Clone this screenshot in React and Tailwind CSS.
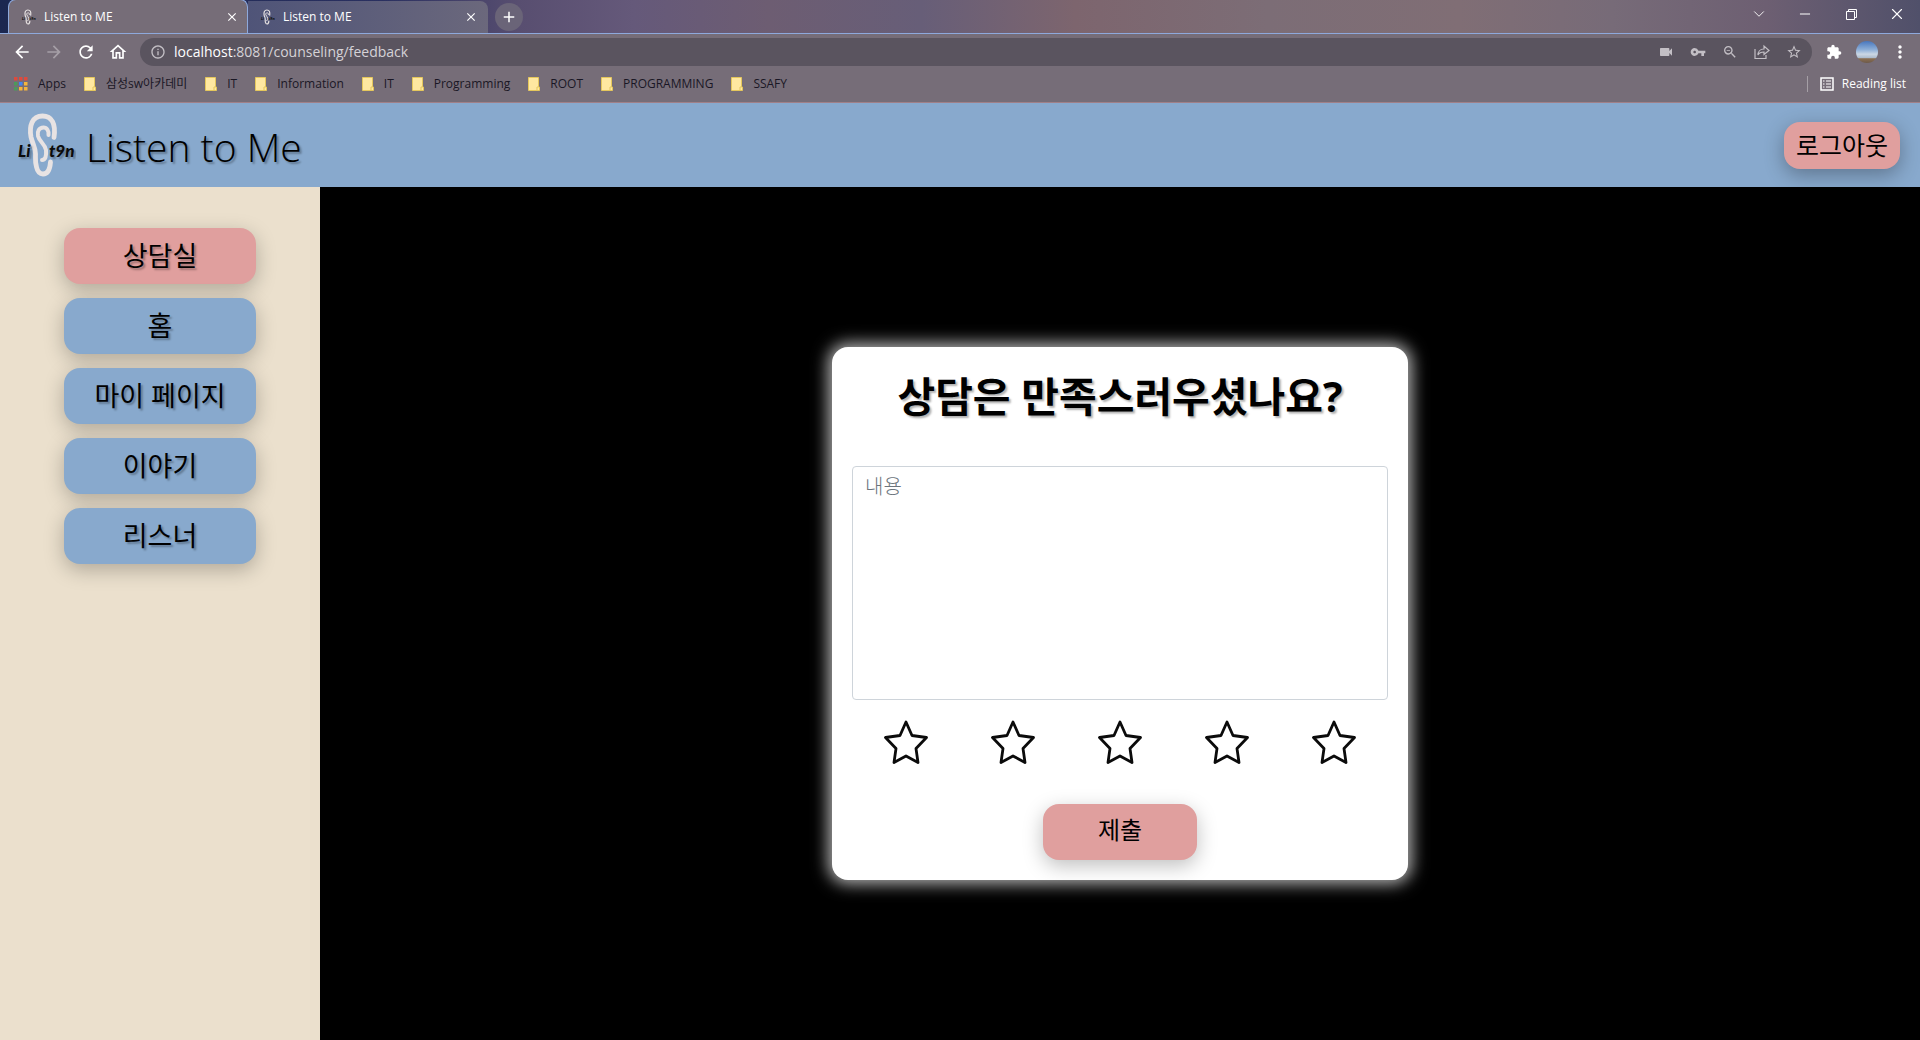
import { ChevronDown, Minus, X } from "lucide-react";
import {
  MdArrowBack, MdArrowForward, MdRefresh, MdOutlineHome, MdInfoOutline, MdVideocam, MdVpnKey,
  MdStarBorder, MdExtension, MdMoreVert, MdClose, MdAdd, MdZoomOut,
} from "react-icons/md";

function EarLogo({ className }) {
  return (
    <svg viewBox="0 0 58 66" className={className} aria-hidden="true">
      <g fill="none" stroke="#e8e3e3" strokeLinecap="round">
        <path strokeWidth="4.8" d="M36 25.500C38 12 34 4 24.500 4 14 4 11 14 13 25c1.500 7 4.500 10 4.500 17 0 5-.5 8 1 13 1 4.500 3 7 6.500 7 5.500 0 7-5 7.500-12" />
        <path strokeWidth="4" d="M30.500 23c.5-4-1.500-7.500-5-7.500-4.500 0-6.500 4-5.500 8.500 1.500 6 7 8 8 14 .5 6-.5 10-4 10" />
      </g>
      <g fill="#0b0b0b" fontFamily="Lato, sans-serif" fontWeight="900" fontStyle="italic" fontSize="17">
        <text x="0" y="45">Li</text>
        <text x="31" y="45">t9n</text>
      </g>
    </svg>
  );
}

function Tab({ active }) {
  return (
    <div
      className={
        active
          ? "flex h-[34px] w-60 items-center rounded-t-lg border border-b-0 border-[#8ea9dc] bg-[#766d78] pr-2 pl-3"
          : "flex h-8 w-60 items-center rounded-tr-lg bg-gradient-to-r from-[#4f5478] to-[#6b687c] pr-2.5 pl-3"
      }
    >
      <EarLogo className="size-4" />
      <span className="ml-[7px] flex-1 text-xs text-white">Listen to ME</span>
      <button aria-label="Close tab" className="text-white">
        <MdClose className="size-3.5" />
      </button>
    </div>
  );
}

const bookmarks = ["삼성sw아카데미", "IT", "Information", "IT", "Programming", "ROOT", "PROGRAMMING", "SSAFY"];

function Folder() {
  return (
    <svg viewBox="0 0 12 14" className="h-3.5 w-3">
      <path d="M.5.5h10v9.500h1v3.500H.5z" fill="#ffe8a0" stroke="#e5c75c" />
      <path d="M9 13v-3h1.500" fill="none" stroke="#e5c75c" />
    </svg>
  );
}

function AppsGrid() {
  const colors = ["#dd4b3e", "#dd4b3e", "#dd4b3e", "#4c9a5b", "#4285f4", "#f4b53c", "#4c9a5b", "#f4b53c", "#f4b53c"];
  return (
    <svg viewBox="0 0 14 14" className="size-3.5">
      {colors.map((c, i) => (
        <rect key={i} x={(i % 3) * 5} y={Math.floor(i / 3) * 5} width="3.500" height="3.500" fill={c} />
      ))}
    </svg>
  );
}

function Browser() {
  return (
    <div className="bg-[#766d78]">
      <div className="flex h-[34px] items-end border-b border-[#8ea9dc] bg-[linear-gradient(90deg,#1b2750_0%,#2a3060_20%,#584e70_27%,#65597a_33%,#6d5d72_40%,#675e78_48%,#7d656e_56%,#7c6d76_66%,#806e75_76%,#776b78_84%,#6d5f72_92%,#50506a_100%)] pl-2">
        <Tab active />
        <Tab />
        <button aria-label="New tab" className="ml-[7px] grid size-7 place-items-center self-center rounded-full bg-[#6a6478] text-white">
          <MdAdd className="size-[18px]" />
        </button>
        <div className="ml-auto flex h-7 self-start text-white">
          <button aria-label="Search tabs" className="grid w-[46px] place-items-center"><ChevronDown className="size-[18px]" strokeWidth={1.2} /></button>
          <button aria-label="Minimize" className="grid w-[46px] place-items-center"><Minus className="size-4" strokeWidth={1.5} /></button>
          <button aria-label="Restore" className="grid w-[46px] place-items-center">
            <svg viewBox="0 0 11 11" className="size-[11px]" fill="none" stroke="currentColor"><path d="M.5 2.500h8v8h-8zM2.500 2.500v-2h8v8h-2" /></svg>
          </button>
          <button aria-label="Close" className="grid w-[46px] place-items-center"><X className="size-[18px]" strokeWidth={1.5} /></button>
        </div>
      </div>
      <div className="flex h-9 items-center pr-2.5 pl-3 text-white">
        <button aria-label="Back" className="mr-3"><MdArrowBack className="size-5" /></button>
        <button aria-label="Forward" className="mr-3 text-[#a59fa6]"><MdArrowForward className="size-5" /></button>
        <button aria-label="Reload" className="mr-3"><MdRefresh className="size-5" /></button>
        <button aria-label="Home" className="mr-3"><MdOutlineHome className="size-5" /></button>
        <div className="flex h-7 flex-1 items-center rounded-full bg-[#5a545f] px-2.5 text-[#c3bfc5]">
          <MdInfoOutline className="size-4" />
          <a href="#address" className="ml-2 flex-1 text-sm text-[#d5d2d7]">
            <span className="text-white">localhost</span>:8081/counseling/feedback
          </a>
          <div className="flex items-center gap-4">
            <MdVideocam className="size-4" />
            <MdVpnKey className="size-4" />
            <MdZoomOut className="size-4" />
            <svg viewBox="0 0 16 16" className="size-4" fill="none" stroke="currentColor" strokeWidth="1.200">
              <path d="M1 5v9.500h11V11" /><path d="M10 5V2l5 4.500-5 4V8c-3 0-5 1-6 3 0-3 2-6 6-6z" />
            </svg>
            <MdStarBorder className="size-4" />
          </div>
        </div>
        <MdExtension className="ml-3.5 size-4" />
        <svg viewBox="0 0 22 22" className="ml-3.5 size-[22px]">
          <defs>
            <linearGradient id="sky" x1="0" y1="0" x2="0" y2="1">
              <stop offset="0" stopColor="#4776bd" /><stop offset=".4" stopColor="#8fb0d8" />
              <stop offset=".6" stopColor="#cbd7e4" /><stop offset=".78" stopColor="#a9b8c9" />
              <stop offset=".8" stopColor="#8b6f52" /><stop offset="1" stopColor="#6d5a4a" />
            </linearGradient>
          </defs>
          <circle cx="11" cy="11" r="11" fill="url(#sky)" />
        </svg>
        <MdMoreVert className="ml-3 size-5" />
      </div>
      <nav aria-label="Bookmarks" className="flex h-[33px] items-center border-b border-[#a08088] pr-3.5 pb-1 pl-3.5 text-xs text-[#1a1725]">
        <a href="#apps" className="mr-[18px] flex items-center gap-2.5"><AppsGrid />Apps</a>
        {bookmarks.map((b, i) => (
          <a key={i} href="#bookmark" className="mr-[18px] flex items-center gap-2.5"><Folder />{b}</a>
        ))}
        <a href="#reading" className="ml-auto flex items-center gap-2 border-l border-[#a59fa6] pl-3 text-white">
          <svg viewBox="0 0 14 14" className="size-3.5" fill="none" stroke="currentColor" strokeWidth="1.500">
            <path d="M1 1h12v12H1z" /><path strokeWidth="1.200" d="M3 4h1.500M6 4h5M3 7h1.500M6 7h5M3 10h1.500M6 10h5" />
          </svg>
          Reading list
        </a>
      </nav>
    </div>
  );
}

const menu = ["상담실", "홈", "마이 페이지", "이야기", "리스너"];

function Star() {
  return (
    <svg viewBox="0 0 44 44" className="size-11" fill="none" stroke="#0b0b0b" strokeWidth="2.800" strokeLinejoin="round">
      <path d="M22 2l6 13.500 14.500 2-10.500 11 2 14-12-6.500-12 6.500 2-14-10.500-11 14.500-2z" />
    </svg>
  );
}

export default function App() {
  return (
    <div className="flex min-h-screen flex-col font-['Open_Sans','Noto_Sans_CJK_KR',sans-serif]">
      <Browser />
      <header className="flex h-[84px] items-center bg-[#88a9cd] pr-5 pl-[18px] text-black text-shadow-[2px_2px_2px_rgb(0_0_0/0.3)]">
        <EarLogo className="h-[66px] w-[58px]" />
        <h1 className="ml-2.5 pt-1 text-[39px] leading-[60px] font-light">Listen to Me</h1>
        <button className="ml-auto rounded-2xl bg-[#e09f9e] px-3 py-2 text-[25px] leading-[31px] font-normal shadow-[0_6px_20px_rgb(0_0_0/0.3)]">
          로그아웃
        </button>
      </header>
      <div className="flex flex-1">
        <nav aria-label="Main" className="flex w-1/6 flex-col items-center gap-3.5 bg-[#ebe0cd] pt-[41px]">
          {menu.map((m, i) => (
            <button
              key={m}
              className={`h-14 w-3/5 rounded-2xl text-[27px] font-normal text-black shadow-[0_6px_20px_rgb(0_0_0/0.25)] text-shadow-[2px_2px_2px_rgb(0_0_0/0.3)] ${i === 0 ? "bg-[#e09f9e]" : "bg-[#88a9cd]"}`}
            >
              {m}
            </button>
          ))}
        </nav>
        <main className="flex flex-1 items-center justify-center bg-black">
          <form className="flex w-9/25 flex-col items-center rounded-2xl bg-white p-5 text-black shadow-[0_0_16px_4px_rgb(255_255_255/0.7)] text-shadow-[2px_2px_2px_rgb(0_0_0/0.3)]">
            <h2 className="mb-10 text-[41px] leading-[59px] font-bold">상담은 만족스러우셨나요?</h2>
            <textarea
              aria-label="내용"
              placeholder="내용"
              className="h-[234px] w-full resize-none rounded border border-[#ced4da] px-3 py-1.5 text-xl font-light placeholder:text-[#6c757d]"
            />
            <div className="mt-5 flex w-full justify-around">
              {[1, 2, 3, 4, 5].map((n) => (
                <button key={n} type="button" aria-label={`${n}점`}><Star /></button>
              ))}
            </div>
            <button type="button" className="mt-10 h-14 w-[154px] rounded-2xl bg-[#e09f9e] pb-1 text-2xl font-normal shadow-[0_6px_20px_rgb(0_0_0/0.25)]">
              제출
            </button>
          </form>
        </main>
      </div>
    </div>
  );
}
